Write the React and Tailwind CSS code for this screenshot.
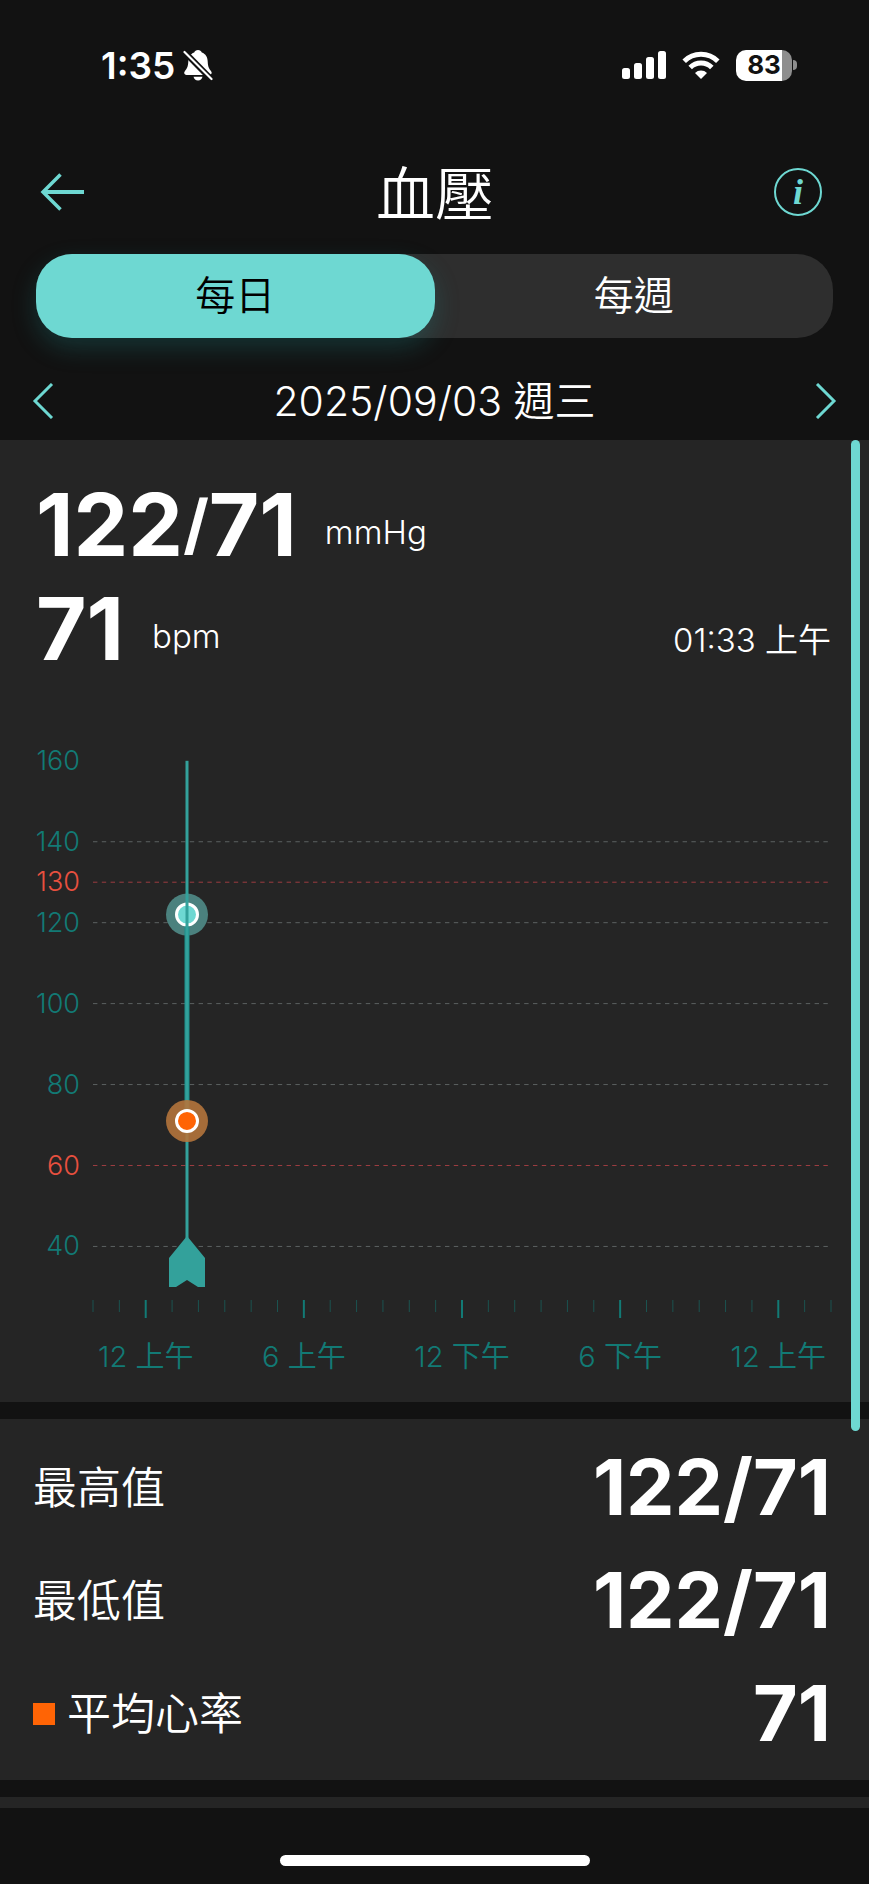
import React, { useState } from "react";

const TABS = ["每日", "每週"];

const GRID_LINES = [
  { value: 160, line: false },
  { value: 140, line: true },
  { value: 130, line: true, limit: true },
  { value: 120, line: true },
  { value: 100, line: true },
  { value: 80, line: true },
  { value: 60, line: true, limit: true },
  { value: 40, line: true },
];

const HOURS = ["12 上午", "6 上午", "12 下午", "6 下午", "12 上午"];

const SUMMARY = [
  { label: "最高值", value: "122/71" },
  { label: "最低值", value: "122/71" },
  { label: "平均心率", value: "71", marker: true },
];

function StatusBar() {
  return (
    <div className="flex h-[130px] items-center justify-between pl-[101px] pr-[72px]">
      <div className="flex items-center gap-2">
        <span className="text-[37px] font-semibold leading-none">1:35</span>
        <svg className="h-8 w-[30px]" viewBox="0 0 30 32" fill="none">
          <path
            d="M15 1c1.900 0 3.300 1.100 3.800 2.600 4 1.400 5.700 4.600 5.900 9 .2 5.200 1.300 7.300 3.200 9.400 1.500 1.700.7 3.900-1.500 3.900H3.500C1.300 25.900.5 23.700 2 22c1.900-2.100 3.100-4.200 3.300-9.400.2-4.400 1.900-7.600 5.900-9C11.700 2.100 13.100 1 15 1z"
            fill="#fff"
          />
          <path d="M10.500 27.800h9c-.5 2.400-2.200 3.700-4.500 3.700s-4-1.300-4.500-3.700z" fill="#fff" />
          <path d="M1.500 3l27 27.500" stroke="#121212" strokeWidth="6" />
          <path d="M1.500 3l27 27" stroke="#fff" strokeWidth="2.200" strokeLinecap="round" />
        </svg>
      </div>

      <div className="flex items-center gap-4">
        <svg className="h-7 w-11" viewBox="0 0 44 28" fill="#fff">
          <rect x="0" y="17" width="8" height="11" rx="2.500" />
          <rect x="12" y="12" width="8" height="16" rx="2.500" />
          <rect x="24" y="6" width="8" height="22" rx="2.500" />
          <rect x="36" y="0" width="8" height="28" rx="2.500" />
        </svg>
        <svg className="h-7 w-[38px]" viewBox="0 0 38 28" fill="none" stroke="#fff" strokeWidth="5">
          <path d="M2.200 10.200a23.800 23.800 0 0 1 33.600 0" />
          <path d="M8.200 16.500a15.300 15.300 0 0 1 21.600 0" />
          <path d="M19 28l-6-6.100a8.500 8.500 0 0 1 12 0z" fill="#fff" stroke="none" />
        </svg>
        <div className="flex items-center gap-px">
          <div className="flex h-[31px] w-14 items-center justify-center rounded-[10px] bg-linear-to-r from-white from-82% to-[#8e8e8e] to-82% text-[26px] font-bold leading-none text-[#121212]">
            83
          </div>
          <div className="h-[10px] w-[4px] rounded-r-full bg-[#8e8e8e]" />
        </div>
      </div>
    </div>
  );
}

function Chevron({ flip }) {
  return (
    <svg className="h-9 w-[22px]" viewBox="0 0 22 36" fill="none" stroke="#6ed8d2" strokeWidth="3">
      <path d={flip ? "M2 1l17 17L2 35" : "M20 1L3 18l17 17"} />
    </svg>
  );
}

function Reading({ children, unit }) {
  return (
    <div className="flex h-[104px] items-center gap-7">
      <div className="flex items-center text-[87px] font-bold leading-none">{children}</div>
      <span className="pt-4 text-[33px] leading-none">{unit}</span>
    </div>
  );
}

function Chart() {
  const left = 93;
  const right = 831;
  const step = (right - left) / 28;
  const y = (value) => 80.8 + (160 - value) * 4.047;
  const x = 187;

  return (
    <svg className="block w-full" viewBox="0 0 869 722" role="img" aria-label="血壓">
      {GRID_LINES.map(({ value, line, limit }) => (
        <g key={value}>
          <text
            x="80"
            y={y(value) + 9}
            textAnchor="end"
            fontSize="27"
            fill={limit ? "#e8503f" : "#127a75"}
          >
            {value}
          </text>
          {line && (
            <line
              x1={left}
              x2={right}
              y1={y(value)}
              y2={y(value)}
              stroke={limit ? "#9c3c40" : "#5c6161"}
              strokeWidth="1"
              strokeDasharray="4.400 4.400"
            />
          )}
        </g>
      ))}

      {Array.from({ length: 29 }, (_, i) => {
        const major = i % 6 === 2;
        return (
          <line
            key={i}
            x1={left + i * step}
            x2={left + i * step}
            y1="620"
            y2={major ? 638 : 632}
            stroke={major ? "#127a75" : "#1b5350"}
            strokeWidth={major ? 2 : 1}
          />
        );
      })}

      {HOURS.map((hour, i) => (
        <text
          key={i}
          x={left + (2 + i * 6) * step}
          y="687"
          textAnchor="middle"
          fontSize="29"
          fill="#127a75"
        >
          {hour}
        </text>
      ))}

      {/* selected reading */}
      <circle cx={x} cy={y(122)} r="21" fill="#4b817e" />
      <circle cx={x} cy={y(122)} r="10.500" fill="#6ed8d2" stroke="#fff" strokeWidth="3" />
      <rect x={x - 2.5} y={y(122) + 12} width="5" height={y(71) - y(122) - 12} fill="#1c8f8b" />
      <rect x={x - 1.5} y={y(160)} width="3" height={558 - y(160)} fill="#33a19b" />
      <path d={`M${x} 556l18 22v29h-7l-11-7-11 7h-7v-29z`} fill="#33a19b" />
      <circle cx={x} cy={y(71)} r="21" fill="#b4743c" fillOpacity="0.9" />
      <circle cx={x} cy={y(71)} r="10.500" fill="#ff6405" stroke="#fff" strokeWidth="3" />
    </svg>
  );
}

export default function App() {
  const [tab, setTab] = useState(0);

  return (
    <div className="min-h-screen bg-[#121212] font-['Inter','Noto_Sans_CJK_TC',sans-serif] font-[350] text-white">
      <StatusBar />

      <header className="flex h-[124px] items-center justify-between pl-10 pr-[47px]">
        <button type="button" aria-label="返回" className="w-14">
          <svg className="h-[38px] w-11" viewBox="0 0 44 38" fill="none" stroke="#6ed8d2">
            <path d="M3 19h41" strokeWidth="4" />
            <path d="M20.500 1.500L3 19l17.500 17.500" strokeWidth="3.500" />
          </svg>
        </button>
        <h1 className="pt-1 text-[59px] font-[350] leading-none">血壓</h1>
        <button
          type="button"
          aria-label="說明"
          className="flex size-12 items-center justify-center rounded-full border-2 border-[#6ed8d2] font-['Liberation_Serif',serif] text-[36px] font-bold italic leading-none text-[#6ed8d2]"
        >
          i
        </button>
      </header>

      <div className="mx-9 flex rounded-[36px] bg-[#2e2e2e]">
        {TABS.map((name, i) => (
          <button
            key={name}
            type="button"
            aria-pressed={tab === i}
            onClick={() => setTab(i)}
            className={`h-[84px] flex-1 rounded-[36px] text-[40px] leading-none ${
              tab === i
                ? "bg-[#6ed8d2] text-black shadow-[0_10px_24px_rgba(32,150,150,0.25)]"
                : "text-white"
            }`}
          >
            {name}
          </button>
        ))}
      </div>

      <div className="flex h-[102px] items-center justify-between px-8 pt-6">
        <button type="button" aria-label="前一天">
          <Chevron />
        </button>
        <p className="text-[41px] leading-none">2025/09/03 週三</p>
        <button type="button" aria-label="後一天">
          <Chevron flip />
        </button>
      </div>

      <main className="relative flex flex-col gap-[17px]">
        <section className="bg-[#252525] pt-8">
          <div className="flex items-end justify-between pl-9 pr-[38px]">
            <div>
              <Reading unit="mmHg">
                122<span className="text-[66px]">/</span>71
              </Reading>
              <Reading unit="bpm">71</Reading>
            </div>
            <div className="flex h-[104px] items-center pt-6">
              <time className="text-[33px] leading-none">01:33 上午</time>
            </div>
          </div>
          <Chart />
        </section>

        <dl className="bg-[#252525] pb-[10px] pl-[33px] pr-[38px] pt-3">
          {SUMMARY.map(({ label, value, marker }) => (
            <div key={label} className="flex h-[113px] items-center justify-between">
              <dt className="flex items-center gap-3 text-[44px] leading-none">
                {marker && <span className="size-[22px] bg-[#ff6405]" />}
                {label}
              </dt>
              <dd className="text-[77px] font-bold leading-none">{value}</dd>
            </div>
          ))}
        </dl>

        <div className="h-[11px] bg-[#252525]" />

        {/* scroll position */}
        <div className="absolute right-[9px] top-0 h-[991px] w-[9px] rounded-full bg-[#6ed8d2]" />
      </main>

      <div className="flex justify-center pb-[18px] pt-[47px]">
        <div className="h-[11px] w-[310px] rounded-full bg-white" />
      </div>
    </div>
  );
}
